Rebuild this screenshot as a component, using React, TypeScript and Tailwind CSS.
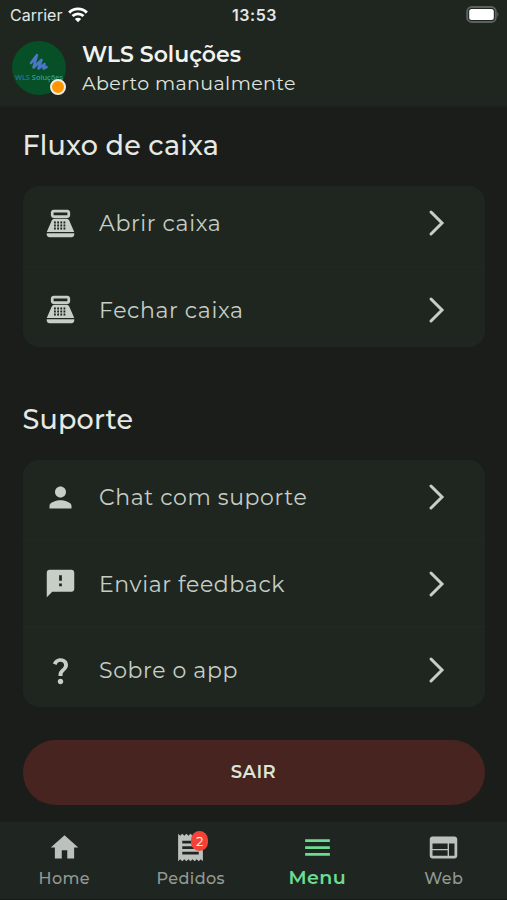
import React from 'react'
import { MdFeedback, MdHome, MdMenu, MdPerson, MdQuestionMark, MdReceipt, MdWeb } from 'react-icons/md'

interface MenuItem {
  title: string
  icon: React.ElementType
}

const keyColumns = [7.3, 9.6, 11.9, 14.2]
const keyRows = [10.5, 12.7, 14.9]

const CashRegisterIcon: React.FC<{ className?: string }> = ({ className }) => (
  <svg className={className} viewBox="0 0 24 24" fill="currentColor">
    <path
      fillRule="evenodd"
      d="M17 2H7C5.9 2 5 2.9 5 4v2c0 1.1.9 2 2 2h10c1.1 0 2-.9 2-2V4c0-1.1-.9-2-2-2zM17 6H7V4h10v2z"
    />
    <path d="M20 22H4c-1.1 0-2-.9-2-2v-1h20v1c0 1.1-.9 2-2 2z" />
    <path d="M18.53 10.19C18.21 9.47 17.49 8.6 16.7 8.6H7.3c-.79 0-1.51.87-1.83 1.59L2 18.1h20l-3.47-7.91z" />
    {keyRows.map((y) =>
      keyColumns.map((x) => <rect key={`${x}-${y}`} x={x} y={y} width="1.3" height="1.5" fill="#1f2620" />)
    )}
  </svg>
)

const cashItems: MenuItem[] = [
  { title: 'Abrir caixa', icon: CashRegisterIcon },
  { title: 'Fechar caixa', icon: CashRegisterIcon }
]

const supportItems: MenuItem[] = [
  { title: 'Chat com suporte', icon: MdPerson },
  { title: 'Enviar feedback', icon: MdFeedback },
  { title: 'Sobre o app', icon: MdQuestionMark }
]

const StatusBar: React.FC = () => (
  <div className="grid h-[29px] grid-cols-3 items-center pl-2.5 pr-2 font-[Inter,sans-serif] text-[#e4e7e4]">
    <div className="flex items-center gap-1.5">
      <span className="text-[16px] leading-none">Carrier</span>
      <svg width="20" height="16" viewBox="0 0 21 16" fill="none" stroke="white" strokeWidth="3">
        <path d="M1.2 5.5C6.5.3 14.5.3 19.8 5.5" />
        <path d="M4.7 9.1c3.3-3.1 8.3-3.1 11.6 0" />
        <path d="M10.5 15.5 7.2 12.1c1.8-1.6 4.8-1.6 6.6 0z" fill="white" stroke="none" />
      </svg>
    </div>
    <span className="text-center text-[16px] font-semibold leading-none tracking-[0.5px]">13:53</span>
    <svg className="ml-auto" width="33" height="17" viewBox="0 0 33 17">
      <rect x="1.2" y="1" width="28.6" height="15" rx="4.5" fill="none" stroke="#5c625e" strokeWidth="1.9" />
      <rect x="3.2" y="3" width="24.6" height="11" rx="2.5" fill="white" />
      <path d="M31.3 6v5c1.5-.6 1.5-4.4 0-5z" fill="#5c625e" />
    </svg>
  </div>
)

const Avatar: React.FC = () => (
  <div className="relative size-[54px] shrink-0">
    <div className="flex size-full flex-col items-center overflow-hidden rounded-full bg-[#064f27] pt-[12px]">
      <svg width="20" height="18" viewBox="0 0 20 18" fill="none" stroke="#4a78c6" strokeLinecap="round" strokeLinejoin="round">
        <path d="M2 10 8 2 4.5 14.5 12.5 7 9.5 15.5 15.5 11 14.5 15.5 17.5 14" strokeWidth="2.6" />
      </svg>
      <span className="mt-[2.5px] whitespace-nowrap font-['Noto_Sans',sans-serif] text-[7.4px] font-medium leading-none text-[#35a19b]">
        <span className="text-[#2676a0]">WLS</span> Soluções
      </span>
    </div>
    <span className="absolute right-0 bottom-0 size-4 rounded-full border-2 border-[#f2ede2] bg-[#ff9500]" />
  </div>
)

const MenuCard: React.FC<{ items: MenuItem[] }> = ({ items }) => (
  <div className="rounded-[16px] bg-[#1f2620]">
    {items.map((item, index) => {
      const Icon = item.icon
      return (
        <React.Fragment key={item.title}>
          {index > 0 && <div className="my-[5px] h-[1.5px] bg-[#202822]" />}
          <button className="flex h-[74.8px] w-full items-center pl-[21px] pr-[39px] text-left text-[#c6cec6]">
            <Icon className="size-[33px] shrink-0" />
            <span className="ml-[22.5px] flex-1 pt-[2px] text-[22px] leading-none tracking-[0.62px]">{item.title}</span>
            <svg
              width="18"
              height="28"
              viewBox="0 0 18 28"
              fill="none"
              stroke="currentColor"
              strokeWidth="3"
              strokeLinecap="round"
            >
              <path d="M3 3 14 14 3 25" />
            </svg>
          </button>
        </React.Fragment>
      )
    })}
  </div>
)

const BottomNav: React.FC = () => {
  const tabs = [
    { label: 'Home', icon: MdHome },
    { label: 'Pedidos', icon: MdReceipt, badge: 2 },
    { label: 'Menu', icon: MdMenu, active: true },
    { label: 'Web', icon: MdWeb }
  ]

  return (
    <nav className="grid h-[78px] grid-cols-4 border-b border-[#171917] bg-[#1f2621] pl-px">
      {tabs.map((tab) => {
        const Icon = tab.icon
        return (
          <button
            key={tab.label}
            className={`flex flex-col items-center pt-[9px] ${tab.active ? 'text-[#6bdc92]' : 'text-[#929994]'}`}
          >
            <span className="relative">
              <Icon className={tab.active ? 'size-[33px]' : 'size-[33px] text-[#bdc1be]'} />
              {tab.badge && (
                <span className="absolute top-0 -right-px flex h-[20px] w-[17px] items-center justify-center rounded-full bg-[#f44336] text-[13px] leading-none text-white">
                  {tab.badge}
                </span>
              )}
            </span>
            <span
              className={
                tab.active
                  ? 'mt-[4px] text-[19px] font-semibold leading-none tracking-[0.4px]'
                  : 'mt-[7px] text-[16px] font-medium leading-none tracking-[0.4px]'
              }
            >
              {tab.label}
            </span>
          </button>
        )
      })}
    </nav>
  )
}

const App: React.FC = () => {
  return (
    <div className="flex h-[900px] w-full flex-col overflow-hidden bg-[#1a1d1a] font-['Montserrat','Inter',sans-serif]">
      {/* Header */}
      <header className="h-[107px] shrink-0 border-b border-[#1c211d] bg-[#1f2620]">
        <StatusBar />
        <div className="flex items-start gap-4 pl-3 pt-[12px]">
          <Avatar />
          <div>
            <h1 className="-mt-px text-[22px] font-semibold leading-[29px] text-[#f0f3f0]">WLS Soluções</h1>
            <p className="text-[19px] leading-[29px] tracking-[0.4px] text-[#dfe4df]">Aberto manualmente</p>
          </div>
        </div>
      </header>

      <main className="flex-1 px-[22.5px]">
        {/* Cash flow */}
        <section className="pt-[23px]">
          <h2 className="mb-[24px] text-[27px] font-medium leading-8 tracking-[0.2px] text-[#e5e8e4]">Fluxo de caixa</h2>
          <MenuCard items={cashItems} />
        </section>

        {/* Support */}
        <section className="pt-[57px]">
          <h2 className="mb-[24px] text-[27px] font-medium leading-8 tracking-[0.2px] text-[#e5e8e4]">Suporte</h2>
          <MenuCard items={supportItems} />
        </section>

        <button className="mt-[33px] h-[64.5px] w-full rounded-full bg-[#472420] text-[18px] font-semibold tracking-[0.4px] text-[#dde5d6]">
          SAIR
        </button>
      </main>

      <BottomNav />
    </div>
  )
}

export default App
